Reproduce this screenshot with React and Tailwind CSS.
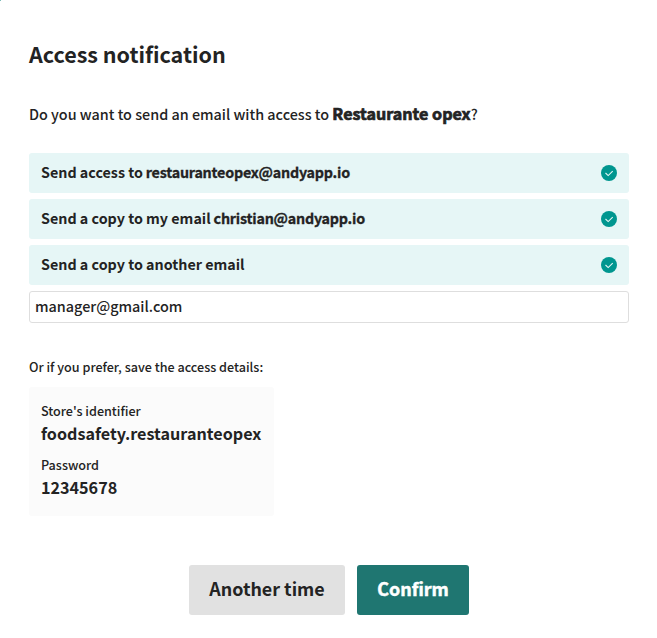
import React, { useState } from 'react'

const CheckIcon = () => (
  <svg width="16" height="16" viewBox="0 0 16 16" className="shrink-0">
    <circle cx="8" cy="8" r="8" fill="#00968f" />
    <path d="M4.5 8 L7.2 10.6 L11.7 6.1" fill="none" stroke="#e6f6f6" strokeWidth="1.1" />
  </svg>
)

const Option = ({ checked, onClick, children }) => (
  <button
    onClick={onClick}
    className="flex h-10 w-full items-center justify-between rounded-[3px] bg-[#e6f6f6] px-3 pb-0.5 text-left text-[14.3px] leading-5 font-bold whitespace-nowrap"
  >
    <span>{children}</span>
    {checked && <span className="pt-0.5"><CheckIcon /></span>}
  </button>
)

const Strong = ({ children }) => (
  <strong className="-ml-[0.4px] font-bold tracking-[-0.22px] [-webkit-text-stroke:0.3px_#232323]">{children}</strong>
)

const App = () => {
  const [options, setOptions] = useState({ access: true, copy: true, other: true })
  const [email, setEmail] = useState('manager@gmail.com')

  const toggle = (key) => setOptions({ ...options, [key]: !options[key] })

  return (
    <div className="relative h-[638px] w-[657px] overflow-hidden bg-white px-[29px] pr-7 font-['Noto_Sans_CJK_SC',sans-serif] text-[#232323]">
      {/* Page behind the rounded dialog corner */}
      <span className="absolute top-0 left-0 h-px w-px bg-[#7dbdb8]" />

      <h1 className="pt-[39px] text-[21.5px] leading-[30px] font-bold whitespace-nowrap">Access notification</h1>

      <p className="mt-[34px] text-[14.37px] leading-5 font-medium whitespace-nowrap">
        Do you want to send an email with access to{' '}
        <strong className="text-[16.1px] font-bold [-webkit-text-stroke:0.7px_#232323]">Restaurante opex</strong>?
      </p>

      {/* Recipients */}
      <div className="mt-[29px] flex flex-col gap-1.5">
        <Option checked={options.access} onClick={() => toggle('access')}>
          Send access to <Strong>restauranteopex@andyapp.io</Strong>
        </Option>
        <Option checked={options.copy} onClick={() => toggle('copy')}>
          Send a copy to my email <Strong>christian@andyapp.io</Strong>
        </Option>
        <Option checked={options.other} onClick={() => toggle('other')}>
          Send a copy to another email
        </Option>
        <input
          type="text"
          value={email}
          onChange={(e) => setEmail(e.target.value)}
          className="h-8 w-full rounded-[3px] border border-[#dedede] px-[5px] pb-[3px] text-[14.4px] font-medium focus:outline-none"
        />
      </div>

      {/* Access details */}
      <p className="mt-[34px] text-[12.6px] leading-5 font-medium whitespace-nowrap">
        Or if you prefer, save the access details:
      </p>
      <div className="mt-2.5 h-[129px] w-[245px] rounded-[3px] bg-[#fbfbfb] px-3 pt-3.5 whitespace-nowrap">
        <p className="text-[12.6px] leading-5 font-medium">Store's identifier</p>
        <p className="text-[16.15px] leading-6 font-bold">foodsafety.restauranteopex</p>
        <p className="mt-2.5 text-[12.6px] leading-5 font-medium">Password</p>
        <p className="text-[16.15px] leading-6 font-bold">12345678</p>
      </div>

      {/* Actions */}
      <div className="mt-[49px] flex justify-center gap-3 text-[17.9px] leading-6 font-bold whitespace-nowrap">
        <button className="h-[50px] w-[156px] rounded-[3px] bg-[#e1e1e1] pb-1">Another time</button>
        <button className="h-[50px] w-28 rounded-[3px] bg-[#1f7671] pb-1 text-white [-webkit-text-stroke:0.5px_white]">
          Confirm
        </button>
      </div>
    </div>
  )
}

export default App
